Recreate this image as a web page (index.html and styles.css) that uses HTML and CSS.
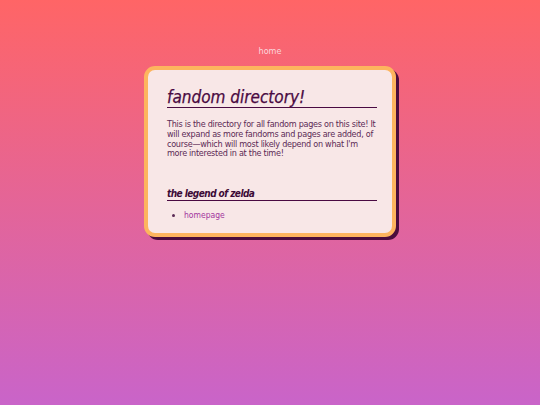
FILE: index.html
```html
<!DOCTYPE html>
<html lang="en">
<head>
<meta charset="utf-8">
<title>fandom directory</title>
<link rel="stylesheet" href="styles.css">
</head>
<body>
<div class="page">
  <nav class="nav"><a href="#" class="nav-link">home</a></nav>
  <main class="card">
    <h1 class="title">fandom directory!</h1>
    <p class="intro">This is the directory for all fandom pages on this site! It will expand as more fandoms and pages are added, of course—which will most likely depend on what I'm more interested in at the time!</p>
    <h2 class="section">the legend of zelda</h2>
    <ul class="links">
      <li><a href="#" class="link">homepage</a></li>
    </ul>
  </main>
</div>
</body>
</html>
```
FILE: styles.css
```css
html, body {
  margin: 0;
  padding: 0;
}
body {
  font-family: "DejaVu Sans Condensed", "DejaVu Sans", sans-serif;
  background: linear-gradient(to bottom, #ff6566 0%, #c964c9 100%);
  min-height: 405px;
}
.page {
  display: flex;
  flex-direction: column;
  align-items: center;
  padding-top: 45px;
}
.nav {
  height: 12px;
  line-height: 12px;
  font-size: 9px;
}
.nav-link {
  color: #fbd6dc;
  text-decoration: none;
}
.card {
  margin-top: 9px;
  background: #f8e7e7;
  border: 4px solid #fdb45e;
  border-radius: 11px;
  box-shadow: 3px 3px 0 #4a0c3c;
  padding: 17px 15px 12px 19px;
  box-sizing: border-box;
  width: 252px;
}
.title {
  margin: 0;
  font-size: 17px;
  font-style: italic;
  font-weight: normal;
  color: #4a0a42;
  line-height: 20px;
  border-bottom: 1px solid #4a0a42;
  -webkit-text-stroke: 0.25px #4a0a42;
}
.intro {
  margin: 12px 0 0;
  font-size: 9px;
  letter-spacing: -0.28px;
  line-height: 9.8px;
  color: #5b2a55;
}
.section {
  margin: 29px 0 0;
  font-size: 10px;
  letter-spacing: -0.55px;
  font-style: italic;
  font-weight: bold;
  color: #3c0a36;
  line-height: 12px;
  border-bottom: 1px solid #4a0a42;
}
.links {
  margin: 8px 0 0;
  padding-left: 17px;
  font-size: 8.5px;
  line-height: 12px;
  color: #5b2a55;
}
.link {
  color: #a2359e;
  text-decoration: none;
}
```
